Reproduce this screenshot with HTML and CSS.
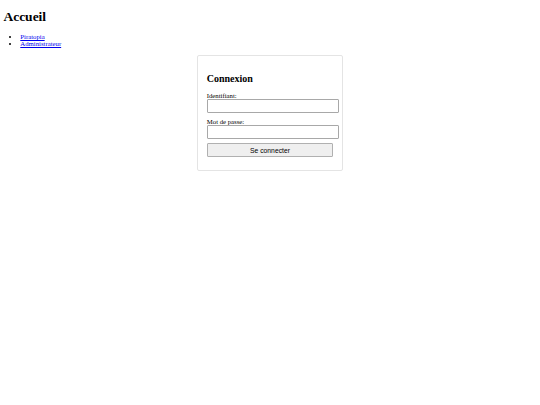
FILE: index.html
```html
<!DOCTYPE html>
<html lang="fr">
<head>
<meta charset="utf-8">
<title>Accueil</title>
<link rel="stylesheet" href="styles.css">
</head>
<body>
<h1 class="title">Accueil</h1>
<ul class="nav">
  <li><a href="#">Piratopia</a></li>
  <li><a href="#">Administrateur</a></li>
</ul>
<div class="login-box">
  <h2 class="login-title">Connexion</h2>
  <form class="login-form">
    <div class="field">
      <label class="field-label" for="user">Identifiant:</label>
      <input class="field-input" id="user" type="text">
    </div>
    <div class="field">
      <label class="field-label" for="pass">Mot de passe:</label>
      <input class="field-input" id="pass" type="password">
    </div>
    <div class="field">
      <button class="submit" type="button">Se connecter</button>
    </div>
  </form>
</div>
</body>
</html>
```

FILE: styles.css
```css
html, body {
  background: #fff;
}
body {
  margin: 3.4px;
  font-family: "Liberation Serif", "Times New Roman", serif;
  font-size: 6.75px;
  color: #000;
}
.title {
  font-size: 13.5px;
  font-weight: bold;
  margin: 6px 0 8px;
}
.nav {
  margin: 6px 0;
  padding-left: 16.9px;
  list-style: disc;
}
.nav a {
  color: #0000ee;
}
.login-box {
  width: 126.5px;
  margin: 7.5px auto;
  padding: 8.4px;
  border: 1px solid #e4e4e4;
  border-radius: 2px;
}
.login-title {
  font-size: 10px;
  font-weight: bold;
  margin: 8.4px 0;
}
.login-form {
  margin: 0;
}
.field {
  margin-bottom: 4.2px;
}
.field-label {
  display: block;
}
.field-input {
  display: block;
  width: 100%;
  box-sizing: content-box;
  margin: 0;
  padding: 3.2px 2px;
  height: 6px;
  font-size: 5.6px;
  border: 1px solid #a8a8a8;
  border-radius: 1px;
  background: #fff;
}
.submit {
  display: block;
  width: 100%;
  height: 14px;
  margin: 0;
  padding: 0;
  font-family: "Liberation Sans", Arial, sans-serif;
  font-size: 6.75px;
  color: #000;
  background: #efefef;
  border: 1px solid #b0b0b0;
  border-radius: 1px;
}
```
